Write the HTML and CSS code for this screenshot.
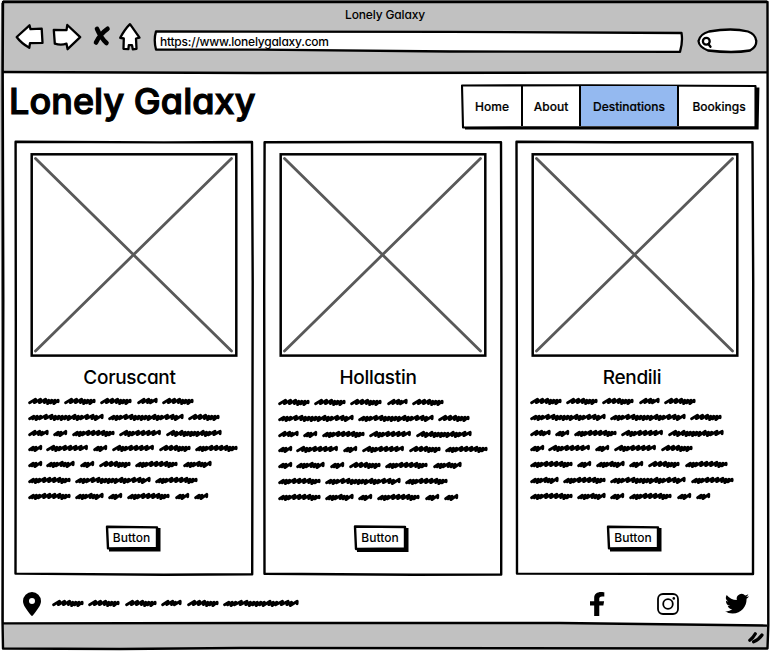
FILE: index.html
```html
<!DOCTYPE html>
<html lang="en">
<head>
<meta charset="utf-8">
<title>Lonely Galaxy</title>
<link rel="stylesheet" href="styles.css">
</head>
<body>
<div class="window">
  <svg class="frame" viewBox="0 0 770 651" aria-hidden="true">
    <path class="edge-shade" d="M3 .7H767M3 648L1.5 90L2 3"/>
    <path class="fill-gray" d="M3 2H768V73H3ZM3 623L560 623L768 626V649H3Z"/>
    <path class="ink" d="M3 2H767.5L768.3 625L767.5 648.5L240 648L120 649L3 648.5L2.5 620L3.3 300L2.7 70Z"/>
    <path class="ink" d="M3 72L260 73L767 72.4M3 623.4L300 623L560 623L767 625.6"/>
  </svg>
  <header class="chrome">
    <div class="window-title">Lonely Galaxy</div>
    <div class="toolbar">
      <svg class="tool back" viewBox="15 22 30 32"><path class="shape" d="M16.7 37L29.5 25.3L30.5 29.2L41.7 28.7L42.5 42.8L30 43.2L29.3 47.8Q21 43 16.7 37Z"/></svg>
      <svg class="tool forward" viewBox="52 22 31 32"><path class="shape" d="M53.8 30L66.5 30.2L67.3 25L80.2 37.2L67.6 49.2L66.5 43.6Q61 45.5 54.8 43.6Z"/></svg>
      <svg class="tool stop" viewBox="93 22 18 32"><path class="cross" d="M97 28.8Q101 38 106.5 43M107.5 28.8Q100 34 96 42.5"/></svg>
      <svg class="tool home" viewBox="118 22 24 32"><path class="shape" d="M130 24.2L139.5 37.7L136 38.5L136.5 48.8L132.8 49.3L132 45.2L128.8 45.2L128.4 49.2L123.5 48.8L123.8 38.5L120.2 37.8Q125 29 130 24.2Z"/></svg>
      <div class="address">
        <svg class="backing" viewBox="153 30 532 24" preserveAspectRatio="none"><path class="shape" d="M156 31.4L450 31.8L681.5 33Q683 42 680 51.8L450 51.5L260 49.7L156 49.5Q153.5 40 156 31.4Z"/></svg>
        <span>https://www.lonelygalaxy.com</span>
      </div>
      <svg class="tool search" viewBox="697 26 61 28"><path class="shape" d="M709 31.5Q732 27.5 748 31.5Q755.5 34 756.3 41Q756.5 47 750 50.5Q733 53.5 708 50.5Q699 47 698.5 41Q700 34 709 31.5Z"/><circle class="lens" cx="706.3" cy="41.3" r="3.4"/><path class="lens" d="M708.5 44.2L710.5 46.8"/></svg>
    </div>
  </header>

  <div class="masthead">
    <h1>Lonely Galaxy</h1>
    <nav class="menu">
      <svg class="backing" viewBox="460 83 300 47"><path class="black" d="M465 127H756V87.5H759.4L758.6 129.6H465Z"/><path class="nav-ink" d="M462 85.5L590 85.2L755.5 86V127L463 127.5Z"/></svg>
      <a class="home-link">Home</a><a class="about-link">About</a><a class="destinations-link active">Destinations</a><a class="bookings-link">Bookings</a>
    </nav>
  </div>

  <main class="cards">
    <article class="card">
      <svg class="backing" viewBox="0 0 240 435"><path class="card-ink" d="M1.6 .7L150 1.4L238 1L238.7 140L238.2 433.3L150 433.8L1.5 432.6L1.8 180Z"/></svg>
      <svg class="picture" viewBox="0 0 208 204"><rect x="1.7" y="1.3" width="204.6" height="201.3"/><path d="M5.5 5.5L201.5 198M201.5 5.5L5.5 198"/></svg>
      <h2>Coruscant</h2>
      <div class="copy" data-copy="AAABA CCA BDEFG DFDFAE DHDAEH ECE EHDEDD"></div>
      <button><svg class="backing" viewBox="0 0 56 28"><path class="black" d="M4 23H51V3H55.5V26.5H4Z"/><path class="button-ink" d="M2 1.8L52 2.4L52 22.9L3 23.4Z"/></svg><span>Button</span></button>
    </article>
    <article class="card second">
      <svg class="backing" viewBox="0 0 240 435"><path class="card-ink" d="M1.6 1.3L120 1L238 1.2L238.4 140L238.2 433.5L150 433.8L1.5 432.8L1.2 150Z"/></svg>
      <svg class="picture" viewBox="0 0 208 204"><rect x="1.7" y="1.3" width="204.6" height="201.3"/><path d="M5.5 5.5L201.5 198M201.5 5.5L5.5 198"/></svg>
      <h2>Hollastin</h2>
      <div class="copy" data-copy="AAABA CCA BDEFG DFDFAE DHDAEH ECE EHDEDD"></div>
      <button><svg class="backing" viewBox="0 0 56 28"><path class="black" d="M4 23H51V3H55.5V27H4Z"/><path class="button-ink" d="M2 1.5L52 2L52 23.5L3 24Z"/></svg><span>Button</span></button>
    </article>
    <article class="card third">
      <svg class="backing" viewBox="0 0 240 435"><path class="card-ink" d="M1.5 .8L100 1.2L237.5 1.2L238.2 140L238 433L2 432.6L1.8 180Z"/></svg>
      <svg class="picture" viewBox="0 0 208 204"><rect x="1.7" y="1.3" width="204.6" height="201.3"/><path d="M5.5 5.5L201.5 198M201.5 5.5L5.5 198"/></svg>
      <h2>Rendili</h2>
      <div class="copy" data-copy="AAABA CCA BDEFG DFDFA EDHDAE HECE EHDEDD"></div>
      <button><svg class="backing" viewBox="0 0 56 28"><path class="black" d="M4 23H51V3H55.5V26.5H4Z"/><path class="button-ink" d="M2 1.8L52 2.4L52 22.9L3 23.4Z"/></svg><span>Button</span></button>
    </article>
  </main>

  <footer class="contact">
    <svg class="pin" viewBox="0 0 18 24"><path fill-rule="evenodd" d="M9 0A9 9 0 0 1 18 9C18 13 15 17 9.8 23.5Q9 24.4 8.2 23.5C3 17 0 13 0 9A9 9 0 0 1 9 0ZM9 6A3 3 0 1 0 9 12A3 3 0 0 0 9 6Z"/></svg>
    <div class="copy" data-copy="AAABAC"></div>
    <svg class="facebook" viewBox="22 0 258 512" preserveAspectRatio="none"><path d="M268 288l14-93h-89v-50c0-25 12-50 52-50h41V7S261 0 226 0c-73 0-127 45-127 125v70H22v93h77v224h94V288z"/></svg>
    <svg class="instagram" viewBox="0 0 22 22"><rect x="1" y="1" width="20" height="20" rx="5"/><circle cx="11" cy="11" r="4.8"/><circle class="dot" cx="16.8" cy="5.4" r="1.3"/></svg>
    <svg class="twitter" viewBox="0 0 24 20"><path d="M7.55 19.5c9.06 0 14-7.5 14-14v-.64A10 10 0 0 0 24 2.3a9.8 9.8 0 0 1-2.83.78A4.9 4.9 0 0 0 23.34.35a9.9 9.9 0 0 1-3.13 1.2 4.92 4.92 0 0 0-8.39 4.48A14 14 0 0 1 1.67.9a4.93 4.93 0 0 0 1.52 6.57A4.9 4.9 0 0 1 .96 6.86v.06a4.92 4.92 0 0 0 3.95 4.83 4.9 4.9 0 0 1-2.22.08 4.93 4.93 0 0 0 4.6 3.42A9.87 9.87 0 0 1 0 17.3a13.9 13.9 0 0 0 7.55 2.2"/></svg>
  </footer>
  <div class="status-bar"><svg viewBox="0 0 18 16"><path d="M2.8 10.3Q6 8 8.3 3.8M6.6 11.8Q12 9.5 15 5"/></svg></div>
</div>
<script src="scribble.js"></script>
</body>
</html>
```
FILE: styles.css
```css
* { box-sizing: border-box; }
body {
  margin: 0;
  background: #fff;
  color: #000;
  font-family: Inter, "Liberation Sans", sans-serif;
  font-feature-settings: "cv11";
  font-size: 12px;
  font-weight: 500;
}
svg { display: block; flex: none; overflow: visible; }
.window { position: relative; width: 770px; height: 651px; overflow: hidden; display: flex; flex-direction: column; isolation: isolate; }
.frame { position: absolute; inset: 0; width: 770px; height: 651px; z-index: -2; }
.backing { position: absolute; inset: 0; width: 100%; height: 100%; z-index: -1; }
.edge-shade { fill: none; stroke: #777; stroke-width: 2; }
.fill-gray { fill: #c1c1c1; }
.ink { fill: none; stroke: #000; stroke-width: 2.4; stroke-linejoin: round; }
.black { fill: #000; }

.chrome { height: 73px; flex: none; }
.window-title { height: 22px; padding-top: 7px; line-height: 15px; text-align: center; letter-spacing: -.15px; }
.toolbar { display: flex; height: 32px; padding-left: 15px; }
.tool { height: 32px; }
.shape { fill: #fff; stroke: #000; stroke-width: 2.3; stroke-linejoin: round; }
.back { width: 30px; margin-right: 7px; }
.forward { width: 31px; margin-right: 10px; }
.stop { width: 18px; margin-right: 7px; }
.home { width: 24px; margin-right: 11px; }
.cross { fill: none; stroke: #000; stroke-width: 4.6; stroke-linecap: round; }
.address { position: relative; width: 532px; height: 24px; margin: 8px 12px 0 0; padding-left: 7px; line-height: 23px; letter-spacing: -.23px; }
.search { width: 61px; height: 28px; margin-top: 4px; }
.lens { fill: none; stroke: #000; stroke-width: 2.3; stroke-linecap: round; }

.masthead { display: flex; justify-content: space-between; height: 68px; flex: none; padding: 10px 10px 0 9px; }
h1 { margin: 0; font-size: 36px; line-height: 36px; font-weight: 500; letter-spacing: .05px; white-space: nowrap; -webkit-text-stroke: 1.2px #000; }
.menu { position: relative; display: flex; width: 300px; height: 47px; padding: 3px 6px 4px 3px; line-height: 41px; text-align: center; }
.menu a { border-right: 2px solid #000; letter-spacing: 0; -webkit-text-stroke: .2px #000; }
.home-link { width: 60px; }
.about-link { width: 58px; }
.destinations-link { width: 98px; }
.menu .bookings-link { width: 75px; padding-left: 5px; border: 0; }
.active { background: #94b9f0; }
.nav-ink { fill: #fff; stroke: #000; stroke-width: 2.1; stroke-linejoin: round; }

.cards { display: flex; height: 435px; flex: none; padding-left: 14px; gap: 9px; }
.card { position: relative; display: flex; flex-direction: column; align-items: center; width: 240px; padding-top: 12px; }
.third { margin-left: 3px; }
.card-ink { fill: none; stroke: #000; stroke-width: 2.4; stroke-linejoin: round; }
.picture { width: 208px; height: 204px; margin-right: 1px; }
.second .picture { margin-right: 0; }
.third .picture { margin-right: 0; }
.picture rect { fill: #fff; stroke: #000; stroke-width: 2.5; }
.picture path { fill: none; stroke: #595959; stroke-width: 2.8; stroke-linecap: round; }
h2 { margin: 8px 0 3px; font-size: 19px; line-height: 25px; font-weight: 500; letter-spacing: -.3px; padding-right: 9px; }
.second h2 { padding-right: 10px; }
.third h2 { padding-right: 6px; }
.copy { display: flex; flex-direction: column; width: 213px; height: 112px; }
.second .copy { margin-top: 1px; margin-left: 2px; }
.third .copy { margin-left: 2px; }
.line { display: flex; gap: 5.4px; height: 15.83px; align-items: center; }
.line path { fill: none; stroke: #000; stroke-width: 2.9; stroke-linecap: round; stroke-linejoin: round; }
button { position: relative; width: 56px; height: 28px; margin: 20px 3px 0 0; padding: 0 4px 3px 0; border: 0; background: none; color: inherit; font: inherit; font-feature-settings: inherit; line-height: 26px; isolation: isolate; }
.second button { margin: 19px 4px 0 0; line-height: 25px; }
.third button { margin-right: 2px; }
button span { padding-left: 2px; letter-spacing: .05px; }
.button-ink { fill: #fff; stroke: #000; stroke-width: 2.4; stroke-linejoin: round; }

.contact { display: flex; height: 48px; flex: none; padding: 16px 0 0 23px; }
.pin { width: 18px; height: 24px; margin-right: 11px; }
.contact .copy { width: 250px; height: 16px; margin-top: 3px; }
.facebook { width: 14px; height: 24px; margin-left: 288px; }
.instagram { width: 22px; height: 22px; margin: 1px 0 0 53px; fill: none; stroke: #000; stroke-width: 1.8; }
.instagram .dot { fill: #000; stroke: none; }
.twitter { width: 24px; height: 20px; margin: 2px 0 0 46px; }
.status-bar { display: flex; justify-content: flex-end; padding: 6px 5px 0 0; }
.status-bar svg { width: 18px; height: 16px; }
.status-bar path { fill: none; stroke: #000; stroke-width: 3.2; stroke-linecap: round; }
```
FILE: scribble.js
```js
// Each word is a pen scribble: "l" is an open stroke, "h" a dense one.
const words = {
  A: [31, "lllhhhh"],
  B: [20, "llhl"],
  C: [75, "hhhllhhhhhlhhllhl"],
  D: [13.6, "hhl"],
  E: [42, "hhhllllhhh"],
  F: [41.3, "lhhlllll"],
  G: [55, "lhlhhhhhlhhll"],
  H: [28, "hhhlhhl"]
};

function scribble([width, strokes]) {
  const steps = [...strokes].map(s => s === "l" ? 4.2 : 2.6);
  const total = steps.reduce((a, b) => a + b, 0);
  const scale = (width - 3.2) / total;
  let x = 1.6;
  let d = "M" + x + " 5.7";
  steps.forEach((step, i) => {
    const dense = strokes[i] === "h";
    const peak = x + step * scale + (dense ? .7 : .8);
    const last = i === steps.length - 1;
    x += step * scale;
    const top = dense ? 3.2 : 2.3;
    const bottom = last ? 4.8 : dense ? (i % 2 ? 6.6 : 5.8) : 5.6;
    d += `L${peak.toFixed(1)} ${top}L${(x + (last ? .7 : -.4)).toFixed(1)} ${bottom}`;
  });
  return `<svg width="${width}" height="8"><path d="${d}"/></svg>`;
}

document.querySelectorAll("[data-copy]").forEach(block => {
  block.innerHTML = block.dataset.copy.split(" ").map(line =>
    `<div class="line">${[...line].map(w => scribble(words[w])).join("")}</div>`
  ).join("");
});
```
